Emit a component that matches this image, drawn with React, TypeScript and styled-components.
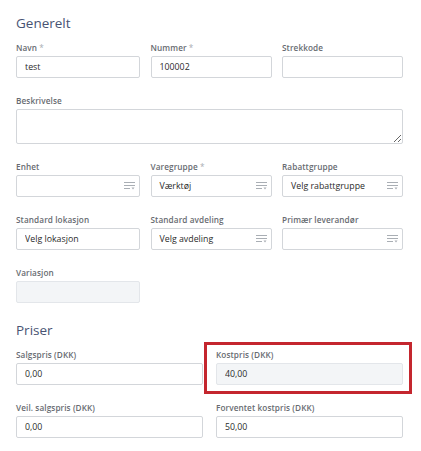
import React from "react";
import styled, { createGlobalStyle } from "styled-components";

const GlobalStyle = createGlobalStyle`
  html, body {
    margin: 0;
    padding: 0;
    background: #ffffff;
  }
  body {
    font-family: "Open Sans", "Noto Sans", "Liberation Sans", sans-serif;
    color: #333333;
  }
  * { box-sizing: border-box; }
`;

const Page = styled.div`
  width: 421px;
  padding: 15px 18px 0 16px;
`;

const SectionTitle = styled.h2<{ $top?: number }>`
  margin: ${(p) => p.$top ?? 0}px 0 12px 0;
  font-size: 13.5px;
  line-height: 16px;
  font-weight: 400;
  color: #485373;
`;

const Grid = styled.div<{ $cols: number; $gap: number }>`
  display: grid;
  grid-template-columns: repeat(${(p) => p.$cols}, 1fr);
  column-gap: ${(p) => p.$gap}px;
  row-gap: 18px;
`;

const Field = styled.div<{ $span?: number }>`
  position: relative;
  display: flex;
  flex-direction: column;
  gap: 3px;
  grid-column: span ${(p) => p.$span ?? 1};
`;

const Label = styled.label`
  font-size: 8.2px;
  line-height: 10px;
  font-weight: 600;
  color: #676b71;
  letter-spacing: 0.1px;
  white-space: nowrap;
`;

const Req = styled.span`
  color: #a9adb3;
  font-weight: 400;
`;

const TextInput = styled.input<{ $muted?: boolean; $width?: number }>`
  display: block;
  width: ${(p) => (p.$width ? `${p.$width}px` : "100%")};
  height: 22px;
  margin: 0;
  padding: 0 8px;
  border: 1px solid ${(p) => (p.$muted ? "#e3e6ea" : "#d3d6da")};
  border-radius: 2px;
  background: ${(p) => (p.$muted ? "#f3f5f7" : "#ffffff")};
  font-family: inherit;
  font-size: 8.8px;
  color: #2b2b2b;
  outline: none;
`;

const TextArea = styled.textarea`
  display: block;
  width: 100%;
  height: 35px;
  margin: 0;
  padding: 4px 8px;
  border: 1px solid #d3d6da;
  border-radius: 2px;
  background: #ffffff;
  font-family: inherit;
  font-size: 8.8px;
  resize: vertical;
  outline: none;
`;

const SelectBox = styled.div`
  display: flex;
  align-items: center;
  justify-content: space-between;
  height: 22px;
  padding: 0 4px 0 8px;
  border: 1px solid #d3d6da;
  border-radius: 2px;
  background: #ffffff;
  font-size: 8.8px;
  color: #2b2b2b;
`;

const SelectValue = styled.span`
  white-space: nowrap;
`;

const Annotation = styled.div`
  position: absolute;
  left: -12px;
  right: -9px;
  top: -8px;
  bottom: -9px;
  border: 3px solid #c4262e;
  pointer-events: none;
`;

const ListIcon = () => (
  <svg width="11" height="8" viewBox="0 0 11 8" aria-hidden="true">
    <g stroke="#a9aeb4" strokeWidth="1" fill="none">
      <line x1="0" y1="0.5" x2="11" y2="0.5" />
      <line x1="0" y1="3.5" x2="11" y2="3.5" />
      <line x1="0" y1="6.5" x2="6" y2="6.5" />
    </g>
    <path d="M7.5 5.5 H10.5 L9 7.5 Z" fill="#a9aeb4" />
  </svg>
);

const Select = ({ value }: { value?: string }) => (
  <SelectBox>
    <SelectValue>{value ?? ""}</SelectValue>
    <ListIcon />
  </SelectBox>
);

const LabelText = ({ text, required }: { text: string; required?: boolean }) => (
  <Label>
    {text}
    {required && <Req> *</Req>}
  </Label>
);

export default function App() {
  return (
    <>
      <GlobalStyle />
      <Page>
        <SectionTitle>Generelt</SectionTitle>
        <Grid $cols={3} $gap={10.5}>
          <Field>
            <LabelText text="Navn" required />
            <TextInput readOnly defaultValue="test" />
          </Field>
          <Field>
            <LabelText text="Nummer" required />
            <TextInput readOnly defaultValue="100002" />
          </Field>
          <Field>
            <LabelText text="Strekkode" />
            <TextInput readOnly defaultValue="" />
          </Field>

          <Field $span={3}>
            <LabelText text="Beskrivelse" />
            <TextArea readOnly defaultValue="" />
          </Field>

          <Field>
            <LabelText text="Enhet" />
            <Select />
          </Field>
          <Field>
            <LabelText text="Varegruppe" required />
            <Select value="Værktøj" />
          </Field>
          <Field>
            <LabelText text="Rabattgruppe" />
            <Select value="Velg rabattgruppe" />
          </Field>

          <Field>
            <LabelText text="Standard lokasjon" />
            <TextInput readOnly defaultValue="Velg lokasjon" />
          </Field>
          <Field>
            <LabelText text="Standard avdeling" />
            <Select value="Velg avdeling" />
          </Field>
          <Field>
            <LabelText text="Primær leverandør" />
            <Select />
          </Field>

          <Field>
            <LabelText text="Variasjon" />
            <TextInput readOnly defaultValue="" $muted $width={124} />
          </Field>
        </Grid>

        <SectionTitle $top={19}>Priser</SectionTitle>
        <Grid $cols={2} $gap={13}>
          <Field>
            <LabelText text="Salgspris (DKK)" />
            <TextInput readOnly defaultValue="0,00" />
          </Field>
          <Field>
            <LabelText text="Kostpris (DKK)" />
            <TextInput readOnly defaultValue="40,00" $muted />
            <Annotation />
          </Field>
          <Field>
            <LabelText text="Veil. salgspris (DKK)" />
            <TextInput readOnly defaultValue="0,00" />
          </Field>
          <Field>
            <LabelText text="Forventet kostpris (DKK)" />
            <TextInput readOnly defaultValue="50,00" />
          </Field>
        </Grid>
      </Page>
    </>
  );
}
